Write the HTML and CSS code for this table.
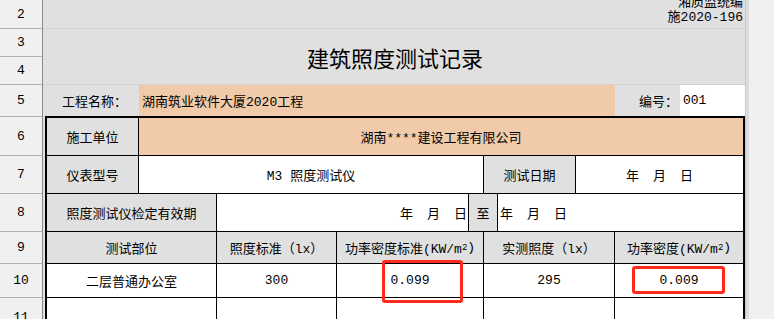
FILE: index.html
```html
<!DOCTYPE html>
<html lang="zh-CN">
<head>
<meta charset="utf-8">
<title>建筑照度测试记录</title>
<link rel="stylesheet" href="styles.css">
</head>
<body>
<div class="app">
  <div class="rowhdrs">
    <div class="rh h2">2</div>
    <div class="rh h3">3</div>
    <div class="rh h4">4</div>
    <div class="rh h5">5</div>
    <div class="rh h6">6</div>
    <div class="rh h7">7</div>
    <div class="rh h8">8</div>
    <div class="rh h9">9</div>
    <div class="rh h10">10</div>
    <div class="rh h11">11</div>
  </div>
  <div class="sheet">
    <div class="row2"><div class="code">湘质监统编<br>施2020-196</div></div>
    <div class="row34"><h1 class="title">建筑照度测试记录</h1></div>
    <div class="row5">
      <div class="c lbl5">工程名称：</div>
      <div class="c proj">湖南筑业软件大厦2020工程</div>
      <div class="c no-lbl">编号：</div>
      <div class="c no-val">001</div>
    </div>
    <div class="tbl">
      <div class="cell gray sp1">施工单位</div>
      <div class="cell orange sp8 end">湖南****建设工程有限公司</div>

      <div class="cell gray sp1">仪表型号</div>
      <div class="cell sp4">M3 照度测试仪</div>
      <div class="cell gray sp2">测试日期</div>
      <div class="cell sp2 end date"><span>年</span><span>月</span><span>日</span></div>

      <div class="cell gray sp2">照度测试仪检定有效期</div>
      <div class="cell sp2 date to-right"><span>年</span><span>月</span><span>日</span></div>
      <div class="cell gray sp2">至</div>
      <div class="cell sp3 end date to-left"><span>年</span><span>月</span><span>日</span></div>

      <div class="cell gray sp2">测试部位</div>
      <div class="cell gray sp1">照度标准（lx）</div>
      <div class="cell gray sp2">功率密度标准(KW/m<sup class="sq">2</sup>)</div>
      <div class="cell gray sp3">实测照度（lx）</div>
      <div class="cell gray sp1 end">功率密度(KW/m<sup class="sq">2</sup>)</div>

      <div class="cell sp2">二层普通办公室</div>
      <div class="cell sp1">300</div>
      <div class="cell sp2">0.099</div>
      <div class="cell sp3">295</div>
      <div class="cell sp1 end">0.009</div>

      <div class="cell sp2"></div>
      <div class="cell sp1"></div>
      <div class="cell sp2"></div>
      <div class="cell sp3"></div>
      <div class="cell sp1 end"></div>
    </div>
  </div>
  <div class="edge"></div>
  <div class="mark mark1"></div>
  <div class="mark mark2"></div>
</div>
</body>
</html>
```
FILE: styles.css
```css
html, body {
  margin: 0;
  padding: 0;
}
body {
  background: #f0f0f0;
  font-family: "Liberation Mono", "Noto Sans CJK SC", monospace;
  font-size: 13px;
  color: #000;
  overflow: hidden;
}
.app {
  position: relative;
  display: flex;
  height: 319px;
  overflow: hidden;
}
.rowhdrs {
  flex: none;
  width: 42px;
  border-right: 1px solid #8c8c8c;
  background: #f0f0f0;
  display: flex;
  flex-direction: column;
}
.rh {
  flex: none;
  box-sizing: border-box;
  border-bottom: 1px solid #b0b0b0;
  display: flex;
  align-items: center;
  justify-content: center;
  font-size: 13px;
}
.h2 { height: 29px; }
.h3 { height: 28px; }
.h4 { height: 28px; }
.h5 { height: 32px; }
.h6 { height: 39px; }
.h7 { height: 38px; }
.h8 { height: 38px; }
.h9 { height: 32px; }
.h10 { height: 34px; }
.h11 { height: 40px; }

.sheet {
  flex: none;
  width: 702px;
  background: #e0e0e0;
  display: flex;
  flex-direction: column;
}
.row2 {
  flex: none;
  height: 28px;
  border-bottom: 1px solid #d6d2ca;
  overflow: hidden;
  display: flex;
  justify-content: flex-end;
  align-items: flex-end;
}
.code {
  text-align: right;
  line-height: 15px;
  padding: 0 2px 3px 0;
  white-space: nowrap;
}
.row34 {
  flex: none;
  height: 55px;
  border-bottom: 1px solid #d6d2ca;
  display: flex;
  align-items: center;
  justify-content: center;
}
.title {
  margin: 0;
  padding-left: 2px;
  font-family: "Noto Sans CJK SC", sans-serif;
  font-size: 22px;
  font-weight: normal;
  line-height: 1;
}
.row5 {
  flex: none;
  height: 31px;
  display: grid;
  grid-template-columns: 96px 476px 65px 65px;
}
.row5 .c {
  display: flex;
  align-items: center;
  white-space: nowrap;
}
.lbl5 { padding-left: 19px; }
.proj { background: #f1cba9; padding-left: 3px; }
.no-lbl { justify-content: flex-end; padding-right: 2px; }
.no-val { background: #fff; padding-left: 3px; }

.tbl {
  flex: none;
  margin-left: 2px;
  width: 696px;
  border: 2px solid #000;
  display: grid;
  grid-template-columns: 92px 78px 120px 132px 15px 14px 78px 39px 128px;
  grid-template-rows: 38px 38px 38px 32px 34px 40px;
  background: #fff;
}
.cell {
  box-sizing: border-box;
  border-right: 1px solid #000;
  border-bottom: 1px solid #000;
  display: flex;
  align-items: center;
  justify-content: center;
  white-space: nowrap;
  background: #fff;
  overflow: hidden;
}
.cell.end { border-right: 0; }
.sp1 { grid-column: span 1; }
.sp2 { grid-column: span 2; }
.sp3 { grid-column: span 3; }
.sp4 { grid-column: span 4; }
.sp8 { grid-column: span 8; }
.gray { background: #e0e0e0; }
.orange { background: #f1cba9; }
.date { gap: 14px; }
.to-right { justify-content: flex-end; padding-right: 1px; }
.to-left { justify-content: flex-start; padding-left: 2px; }
.sq {
  font-size: 9px;
  line-height: 0;
  vertical-align: 5px;
}
.edge {
  flex: none;
  width: 3px;
  border-left: 1px solid #cacaca;
  background: #dcdcdc;
}
.mark {
  position: absolute;
  box-sizing: border-box;
  border: 3px solid #ff2a1a;
  border-radius: 3px;
}
.mark1 { left: 382px; top: 260px; width: 81px; height: 43px; }
.mark2 { left: 632px; top: 266px; width: 93px; height: 28px; }
```
